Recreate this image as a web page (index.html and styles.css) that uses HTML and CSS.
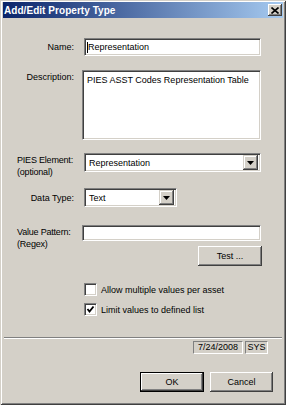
FILE: index.html
```html
<!DOCTYPE html>
<html lang="en">
<head>
    <meta charset="UTF-8">
    <meta name="viewport" content="width=device-width, initial-scale=1.0">
    <title>Add/Edit Property Type</title>
    <link rel="stylesheet" href="styles.css">
</head>
<body>
    <div class="window">
        <div class="titlebar">
            <span class="title">Add/Edit Property Type</span>
            <span class="close">
                <svg width="8" height="7" viewBox="0 0 8 7"><path d="M0.5 0.5 L7.5 6.5 M7.5 0.5 L0.5 6.5" stroke="#000" stroke-width="1.6" fill="none"/></svg>
            </span>
        </div>

        <div class="content">
            <div class="form">
                <div class="row row-name">
                    <label class="label">Name:</label>
                    <div class="textbox name-box"><span class="caret"></span>Representation</div>
                </div>

                <div class="row row-desc">
                    <label class="label label-top">Description:</label>
                    <div class="textarea">PIES ASST Codes Representation Table</div>
                </div>

                <div class="row row-pies">
                    <label class="label label-multi">PIES Element:<br>(optional)</label>
                    <div class="combo combo-wide">
                        <span class="combo-text">Representation</span>
                        <span class="drop"><svg width="7" height="4" viewBox="0 0 7 4"><polygon points="0,0 7,0 3.5,4" fill="#000"/></svg></span>
                    </div>
                </div>

                <div class="row row-type">
                    <label class="label">Data Type:</label>
                    <div class="combo combo-short">
                        <span class="combo-text">Text</span>
                        <span class="drop"><svg width="7" height="4" viewBox="0 0 7 4"><polygon points="0,0 7,0 3.5,4" fill="#000"/></svg></span>
                    </div>
                </div>

                <div class="row row-pattern">
                    <label class="label label-multi">Value Pattern:<br>(Regex)</label>
                    <div class="field-col">
                        <div class="textbox pattern-box"></div>
                        <button class="btn btn-test">Test ...</button>
                    </div>
                </div>

                <div class="check check-first">
                    <span class="box"></span>
                    <span>Allow multiple values per asset</span>
                </div>
                <div class="check check-second">
                    <span class="box">
                        <svg width="9" height="9" viewBox="0 0 9 9"><polyline points="1.5,4 3.5,6.5 7.5,1.5" stroke="#000" stroke-width="1.8" fill="none"/></svg>
                    </span>
                    <span>Limit values to defined list</span>
                </div>
            </div>

            <div class="separator"></div>

            <div class="stamp">
                <span class="stamp-cell stamp-date">7/24/2008</span>
                <span class="stamp-cell stamp-user">SYS</span>
            </div>

            <div class="actions">
                <button class="btn btn-default">OK</button>
                <button class="btn btn-cancel">Cancel</button>
            </div>
        </div>
    </div>
</body>
</html>
```

FILE: styles.css
```css
body {
    margin: 0;
    font-family: "Liberation Sans", Arial, sans-serif;
    font-size: 9px;
    color: #000;
}
.window {
    width: 286px;
    height: 405px;
    box-sizing: border-box;
    padding: 2px 3px 3px 3px;
    background: #d4d0c8;
    display: flex;
    flex-direction: column;
    box-shadow: inset 1px 1px 0 #d4d0c8, inset -1px -1px 0 #404040,
                inset 2px 2px 0 #fff, inset -2px -2px 0 #808080;
}
.titlebar {
    height: 16px;
    display: flex;
    align-items: center;
    padding: 0 1px 0 1px;
    background: linear-gradient(to right, #0a246a, #a6caf0);
    color: #fff;
}
.title {
    font-weight: bold;
    font-size: 10px;
    letter-spacing: 0.05px;
}
.close {
    margin-left: auto;
    width: 14px;
    height: 12px;
    display: flex;
    align-items: center;
    justify-content: center;
    background: #d4d0c8;
    box-shadow: inset -1px -1px 0 #404040, inset 1px 1px 0 #fff,
                inset -2px -2px 0 #808080;
}
.content {
    flex: 1;
    display: flex;
    flex-direction: column;
}
.form {
    padding-left: 14px;
    display: flex;
    flex-direction: column;
}
.row {
    display: flex;
    align-items: flex-start;
}
.label {
    width: 57px;
    margin-right: 10px;
    line-height: 12px;
    text-align: right;
    white-space: nowrap;
    flex-shrink: 0;
}
.label-top {
    padding-top: 1px;
}
.label-multi {
    padding-top: 1px;
    text-align: left;
    letter-spacing: -0.2px;
}
.row-name {
    margin-top: 20px;
    align-items: center;
}
.row-desc {
    margin-top: 14px;
}
.row-pies {
    margin-top: 13px;
}
.row-type {
    margin-top: 10px;
    align-items: center;
}
.row-pattern {
    margin-top: 18px;
}
.textbox, .textarea, .combo {
    box-sizing: border-box;
    background: #fff;
    border: 1px solid;
    border-color: #808080 #fff #fff #808080;
    box-shadow: inset 1px 1px 0 #404040, inset -1px -1px 0 #d4d0c8;
}
.name-box {
    width: 177px;
    height: 18px;
    line-height: 16px;
    padding-left: 2px;
    display: flex;
    align-items: center;
}
.caret {
    width: 1px;
    height: 11px;
    background: #000;
}
.textarea {
    margin-left: -2px;
    width: 179px;
    height: 70px;
    padding: 3px 4px;
    line-height: 12px;
}
.combo {
    height: 19px;
    display: flex;
    align-items: center;
    padding: 2px;
}
.combo-wide {
    width: 177px;
}
.combo-short {
    width: 93px;
}
.combo-text {
    flex: 1;
    padding-left: 2px;
}
.drop {
    width: 15px;
    height: 15px;
    box-sizing: border-box;
    display: flex;
    align-items: center;
    justify-content: center;
    background: #d4d0c8;
    box-shadow: inset -1px -1px 0 #404040, inset 1px 1px 0 #d4d0c8,
                inset -2px -2px 0 #808080, inset 2px 2px 0 #fff;
}
.field-col {
    display: flex;
    flex-direction: column;
    align-items: flex-end;
    margin-left: -2px;
}
.pattern-box {
    width: 179px;
    height: 16px;
}
.btn {
    font-family: "Liberation Sans", Arial, sans-serif;
    font-size: 9px;
    color: #000;
    height: 20px;
    padding: 0;
    border: none;
    background: #d4d0c8;
    box-shadow: inset -1px -1px 0 #404040, inset 1px 1px 0 #fff,
                inset -2px -2px 0 #808080, inset 2px 2px 0 #d4d0c8;
}
.btn-test {
    width: 64px;
    margin-top: 5px;
    margin-right: -1px;
}
.check {
    display: flex;
    align-items: center;
    margin-left: 67px;
    height: 13px;
}
.check-first {
    margin-top: 17px;
}
.check-second {
    margin-top: 7px;
}
.box {
    width: 13px;
    height: 13px;
    box-sizing: border-box;
    margin-right: 4px;
    display: flex;
    align-items: center;
    justify-content: center;
    background: #fff;
    border: 1px solid;
    border-color: #808080 #fff #fff #808080;
    box-shadow: inset 1px 1px 0 #404040, inset -1px -1px 0 #d4d0c8;
}
.separator {
    margin: 21px 1px 0 1px;
    height: 0;
    border-top: 1px solid #808080;
    border-bottom: 1px solid #fff;
}
.stamp {
    display: flex;
    justify-content: flex-end;
    gap: 2px;
    margin-top: 2px;
    margin-right: 15px;
}
.stamp-cell {
    box-sizing: border-box;
    height: 13px;
    line-height: 11px;
    text-align: center;
    border: 1px solid;
    border-color: #808080 #fff #fff #808080;
}
.stamp-date {
    width: 50px;
}
.stamp-user {
    width: 23px;
}
.actions {
    display: flex;
    justify-content: flex-end;
    gap: 6px;
    margin-top: 18px;
    margin-right: 10px;
}
.btn-default {
    width: 64px;
    box-shadow: inset 0 0 0 1px #000, inset -2px -2px 0 #404040,
                inset 2px 2px 0 #fff, inset -3px -3px 0 #808080;
}
.btn-cancel {
    width: 63px;
}
```
